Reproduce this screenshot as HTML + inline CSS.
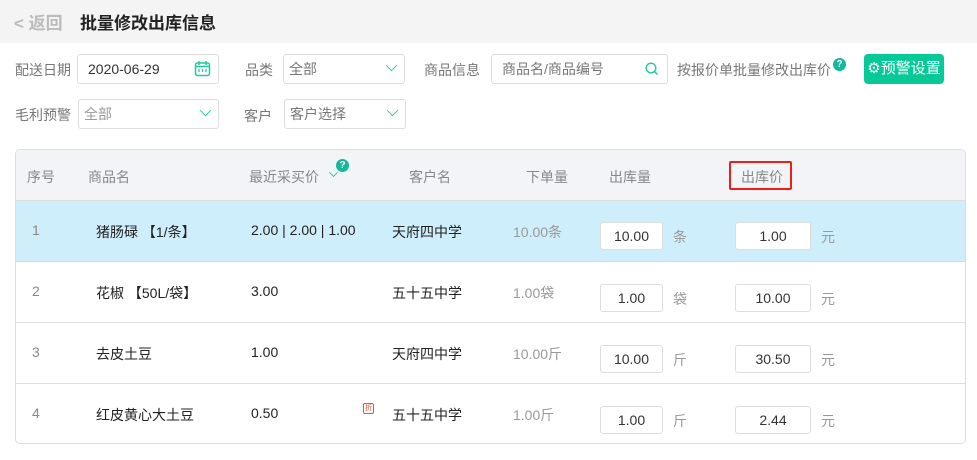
<!DOCTYPE html>
<html><head><meta charset="utf-8"><style>
*{margin:0;padding:0;box-sizing:border-box}
body{width:977px;height:460px;background:#fff;font-family:"Liberation Sans","Noto Sans CJK SC",sans-serif;font-size:14px;color:#333;position:relative;overflow:hidden}
.a{position:absolute;white-space:nowrap}
.hdr{left:0;top:0;width:977px;height:43px;background:#f4f4f4}
.lbl{color:#777;font-size:14px}
.box{position:absolute;border:1px solid #ddd;border-radius:3px;background:#fff;height:30px;line-height:28px;padding-left:10px;font-size:14px}
.chev{position:absolute;right:8px;top:8px;width:9px;height:9px;border-right:1.5px solid #1ccda0;border-bottom:1.5px solid #1ccda0;transform:rotate(45deg) scale(.9);top:6px}
.tbl{left:15px;top:149px;width:951px;height:295px;border:1px solid #ddd;border-radius:5px;overflow:hidden}
.th{left:0;top:0;width:951px;height:51px;background:#f3f4f8;border-bottom:1px solid #ddd}
.row{position:absolute;left:0;width:951px;height:61px;border-bottom:1px solid #ddd}
.c{position:absolute;color:#888;font-size:14px}
.inp{position:absolute;height:28px;border:1px solid #ddd;border-radius:3px;background:#fff;text-align:center;line-height:26px;font-size:14px;color:#333}
.q{display:inline-block;width:13px;height:13px;border-radius:50%;background:#14b89a;color:#fff;font-size:10px;font-weight:bold;line-height:13px;text-align:center}
</style></head><body>
<div class="a hdr"></div>
<div class="a" style="left:14px;top:9px;font-size:17px;color:#bbb;font-weight:bold">&lt; 返回</div>
<div class="a" style="left:80px;top:9px;font-size:17px;color:#222;font-weight:bold">批量修改出库信息</div>

<div class="a lbl" style="left:15px;top:60px">配送日期</div>
<div class="box" style="left:77px;top:54px;width:142px;color:#333">2020-06-29
<svg style="position:absolute;right:7px;top:5px" width="17" height="17" viewBox="0 0 17 17"><rect x="1.5" y="3" width="14" height="12.5" rx="2" fill="none" stroke="#1ccda0" stroke-width="1.5"/><path d="M5 1v4M12 1v4M1.5 6.5h14" stroke="#1ccda0" stroke-width="1.5"/><path d="M5 9v3M8.5 9v3M12 9v3" stroke="#1ccda0" stroke-width="1.3"/></svg></div>
<div class="a lbl" style="left:245px;top:60px">品类</div>
<div class="box" style="left:283px;top:54px;width:122px;color:#777;padding-left:5px">全部<span class="chev"></span></div>
<div class="a lbl" style="left:424px;top:60px">商品信息</div>
<div class="box" style="left:491px;top:54px;width:177px;color:#777">商品名/商品编号
<svg style="position:absolute;right:8px;top:7px" width="14" height="14" viewBox="0 0 14 14"><circle cx="6" cy="6" r="4.8" fill="none" stroke="#1ccda0" stroke-width="1.4"/><path d="M9.5 9.5l3 3" stroke="#1ccda0" stroke-width="1.4"/></svg></div>
<div class="a lbl" style="left:677px;top:60px">按报价单批量修改出库价</div>
<div class="a" style="left:833px;top:54px"><span class="q">?</span></div>
<div class="a" style="left:864px;top:54px;width:80px;height:30px;background:#06c998;border-radius:4px;color:#fff;font-size:15px;line-height:30px;text-align:center">⚙预警设置</div>

<div class="a lbl" style="left:15px;top:105px">毛利预警</div>
<div class="box" style="left:78px;top:99px;width:141px;color:#999;padding-left:5px">全部<span class="chev"></span></div>
<div class="a lbl" style="left:244px;top:106px">客户</div>
<div class="box" style="left:284px;top:99px;width:122px;color:#777;padding-left:5px">客户选择<span class="chev"></span></div>

<div class="a tbl">
<div class="a th">
<div class="c" style="left:11px;top:17px">序号</div>
<div class="c" style="left:72px;top:17px">商品名</div>
<div class="c" style="left:233px;top:17px">最近采买价</div>
<span class="chev" style="left:314px;top:19px;right:auto;width:7px;height:7px;position:absolute"></span>
<div class="a" style="left:320px;top:5px"><span class="q">?</span></div>
<div class="c" style="left:393px;top:17px">客户名</div>
<div class="c" style="left:510px;top:17px">下单量</div>
<div class="c" style="left:593px;top:17px">出库量</div>
<div class="a" style="left:713px;top:11px;width:63px;height:29px;border:2px solid #f01e14;border-radius:2px"></div>
<div class="c" style="left:725px;top:17px">出库价</div>
</div>

<div class="row" style="top:51px;background:#cfeefc">
<div class="c" style="left:16px;top:21px">1</div>
<div class="c" style="left:80px;top:21px;color:#222">猪肠碌 【1/条】</div>
<div class="c" style="left:235px;top:21px;color:#222">2.00 | 2.00 | 1.00</div>
<div class="c" style="left:376px;top:21px;color:#222">天府四中学</div>
<div class="c" style="left:497px;top:21px;color:#999">10.00条</div>
<div class="inp" style="left:584px;top:21px;width:63px">10.00</div>
<div class="c" style="left:657px;top:26px;color:#999">条</div>
<div class="inp" style="left:719px;top:21px;width:76px">1.00</div>
<div class="c" style="left:805px;top:26px;color:#999">元</div>
</div>
<div class="row" style="top:112px">
<div class="c" style="left:16px;top:21px">2</div>
<div class="c" style="left:80px;top:21px;color:#222">花椒 【50L/袋】</div>
<div class="c" style="left:235px;top:21px;color:#222">3.00</div>
<div class="c" style="left:376px;top:21px;color:#222">五十五中学</div>
<div class="c" style="left:497px;top:21px;color:#999">1.00袋</div>
<div class="inp" style="left:584px;top:22px;width:63px">1.00</div>
<div class="c" style="left:657px;top:27px;color:#999">袋</div>
<div class="inp" style="left:719px;top:22px;width:76px">10.00</div>
<div class="c" style="left:805px;top:27px;color:#999">元</div>
</div>
<div class="row" style="top:173px">
<div class="c" style="left:16px;top:21px">3</div>
<div class="c" style="left:80px;top:21px;color:#222">去皮土豆</div>
<div class="c" style="left:235px;top:21px;color:#222">1.00</div>
<div class="c" style="left:376px;top:21px;color:#222">天府四中学</div>
<div class="c" style="left:497px;top:21px;color:#999">10.00斤</div>
<div class="inp" style="left:584px;top:22px;width:63px">10.00</div>
<div class="c" style="left:657px;top:27px;color:#999">斤</div>
<div class="inp" style="left:719px;top:22px;width:76px">30.50</div>
<div class="c" style="left:805px;top:27px;color:#999">元</div>
</div>
<div class="row" style="top:234px;border-bottom:none">
<div class="c" style="left:16px;top:21px">4</div>
<div class="c" style="left:80px;top:21px;color:#222">红皮黄心大土豆</div>
<div class="c" style="left:235px;top:21px;color:#222">0.50</div>
<div class="a" style="left:347px;top:19px;width:11px;height:11px;border:1px solid #e8543a;border-radius:2px;font-size:7px;color:#e8543a;line-height:9px;text-align:center">折</div>
<div class="c" style="left:376px;top:21px;color:#222">五十五中学</div>
<div class="c" style="left:497px;top:21px;color:#999">1.00斤</div>
<div class="inp" style="left:584px;top:22px;width:63px">1.00</div>
<div class="c" style="left:657px;top:27px;color:#999">斤</div>
<div class="inp" style="left:719px;top:22px;width:76px">2.44</div>
<div class="c" style="left:805px;top:27px;color:#999">元</div>
</div>
</div>
</body></html>
